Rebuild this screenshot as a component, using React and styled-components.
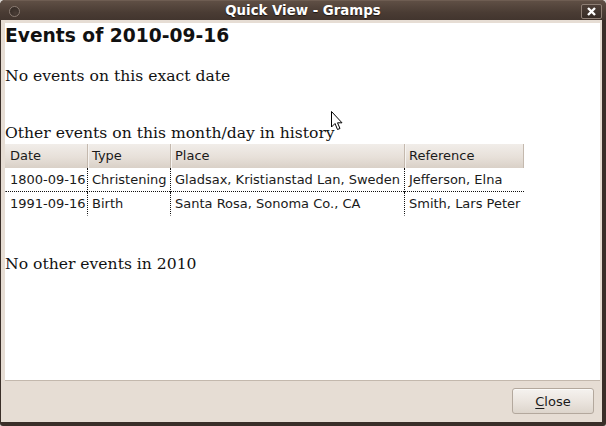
import styled, { createGlobalStyle } from 'styled-components';

const GlobalStyle = createGlobalStyle`
  html, body {
    margin: 0;
    padding: 0;
    background: #d9d4cf;
  }
`;

const Window = styled.div`
  position: relative;
  width: 606px;
  height: 426px;
  display: flex;
  flex-direction: column;
  background: #3a2f29;
  border-radius: 5px 5px 3px 3px;
  overflow: hidden;
  font-family: 'DejaVu Sans', 'Liberation Sans', sans-serif;
`;

const TitleBar = styled.div`
  position: relative;
  height: 20px;
  flex: none;
  display: flex;
  align-items: center;
  justify-content: center;
  background: linear-gradient(#5f4f45, #4a3c34 60%, #42352e);
  border-top: 1px solid #6e5d52;
  box-sizing: border-box;
`;

const Title = styled.span`
  color: #ffffff;
  font-family: 'DejaVu Sans', sans-serif;
  font-weight: bold;
  font-size: 13.33px;
  text-shadow: 0 1px 1px #1e1612;
`;

const MenuDot = styled.span`
  position: absolute;
  left: 9px;
  top: 5px;
  width: 9px;
  height: 9px;
  border-radius: 50%;
  border: 1px solid #8a7b72;
  background: radial-gradient(circle at 60% 70%, #4a3d36, #2f2621);
`;

const CloseBox = styled.span`
  position: absolute;
  right: 4px;
  top: 3px;
  width: 19px;
  height: 13px;
  display: flex;
  align-items: center;
  justify-content: center;
  border: 1px solid #8e7f75;
  border-radius: 2px;
  background: linear-gradient(#4d3f37, #362b25);
`;

const Body = styled.div`
  flex: 1;
  display: flex;
  flex-direction: column;
  margin: 0 4px 4px 1px;
  padding: 3px 2px 0 4px;
  background: #e6ddd4;
`;

const Panel = styled.div`
  flex: 1;
  background: #ffffff;
  border-bottom: 1px solid #c3b8ad;
  padding: 2px 0 0 0;
  color: #111;
`;

const Heading = styled.div`
  font-family: 'DejaVu Sans', sans-serif;
  font-weight: bold;
  font-size: 18.67px;
  line-height: 22px;
  margin-bottom: 20px;
`;

const Para = styled.div`
  font-family: 'DejaVu Serif', 'Liberation Serif', serif;
  font-size: 15.6px;
  line-height: 19px;
  margin-top: ${(p) => p.above || 0}px;
  margin-bottom: ${(p) => p.gap || 0}px;
`;

const Table = styled.div`
  display: grid;
  grid-template-columns: 82px 83px 234px 120px;
  width: 519px;
  margin-top: 1px;
  font-family: 'DejaVu Sans', sans-serif;
  font-size: 13px;
  color: #1a1a1a;
`;

const HeadCell = styled.div`
  height: 24px;
  line-height: 24px;
  padding-left: 4px;
  background: linear-gradient(#f1ede9, #e7e0d9 55%, #d9d0c7);
  border-left: ${(p) => (p.first ? '1px solid transparent' : '1px solid #c4b9ae')};
  box-shadow: ${(p) => (p.first ? 'none' : 'inset 1px 0 0 #f6f3f0')};
  border-right: ${(p) => (p.last ? '1px solid #c4b9ae' : 'none')};
  white-space: nowrap;
`;

const Cell = styled.div`
  height: 23px;
  line-height: 23px;
  padding-left: 4px;
  white-space: nowrap;
  border-left: ${(p) => (p.first ? '1px solid transparent' : '1px dotted #111')};
  border-bottom: ${(p) => (p.lastRow ? '1px solid transparent' : '1px dotted #111')};
`;

const Actions = styled.div`
  flex: none;
  height: 41px;
  display: flex;
  justify-content: flex-end;
  align-items: flex-start;
  padding: 7px 6px 0 0;
  box-sizing: border-box;
`;

const Button = styled.button`
  width: 82px;
  height: 26px;
  font-family: 'DejaVu Sans', sans-serif;
  font-size: 13px;
  color: #1a1a1a;
  border: 1px solid #b3a89d;
  border-radius: 3px;
  background: linear-gradient(#f5f2ef, #ebe5df 50%, #ddd5cc);
  box-shadow: inset 0 1px 0 #fbfaf8;
  padding: 0;
  u {
    text-decoration: underline;
    text-underline-offset: 2px;
  }
`;

const Pointer = styled.svg`
  position: absolute;
  left: 331px;
  top: 111px;
`;

const rows = [
  ['1800-09-16', 'Christening', 'Gladsax, Kristianstad Lan, Sweden', 'Jefferson, Elna'],
  ['1991-09-16', 'Birth', 'Santa Rosa, Sonoma Co., CA', 'Smith, Lars Peter'],
];

const headers = ['Date', 'Type', 'Place', 'Reference'];

function App() {
  return (
    <>
      <GlobalStyle />
      <Window>
        <TitleBar>
          <MenuDot />
          <Title>Quick View - Gramps</Title>
          <CloseBox>
            <svg width="11" height="9" viewBox="0 0 11 9">
              <path d="M2 1 L9 8 M9 1 L2 8" stroke="#fff" strokeWidth="2.4" />
            </svg>
          </CloseBox>
        </TitleBar>
        <Body>
          <Panel>
            <Heading>Events of 2010-09-16</Heading>
            <Para gap={38}>No events on this exact date</Para>
            <Para>Other events on this month/day in history</Para>
            <Table>
              {headers.map((h, i) => (
                <HeadCell key={h} first={i === 0} last={i === headers.length - 1}>
                  {h}
                </HeadCell>
              ))}
              {rows.map((r, ri) =>
                r.map((c, ci) => (
                  <Cell key={ri + '-' + ci} first={ci === 0} lastRow={ri === rows.length - 1}>
                    {c}
                  </Cell>
                ))
              )}
            </Table>
            <Para above={39}>No other events in 2010</Para>
          </Panel>
          <Actions>
            <Button>
              <u>C</u>lose
            </Button>
          </Actions>
        </Body>
        <Pointer width="12" height="20" viewBox="0 0 12 20">
          <path d="M0.5 0.5 L0.5 16 L4 12.5 L6.5 18.5 L9 17.5 L6.5 11.8 L11 11.8 Z" fill="#fff" stroke="#000" strokeWidth="1" />
        </Pointer>
      </Window>
    </>
  );
}

export default App;
